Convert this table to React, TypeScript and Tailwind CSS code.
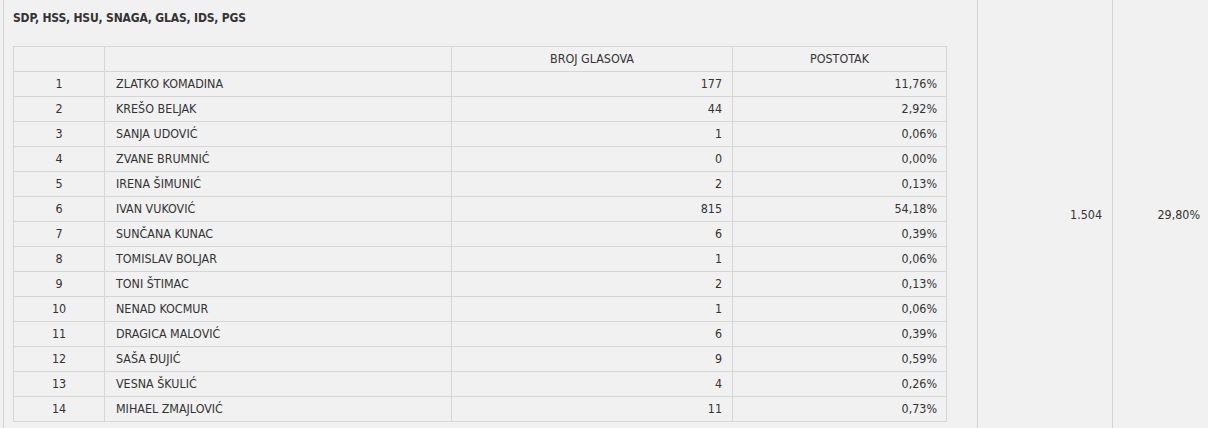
import React from "react";

const rows: [number, string, string, string][] = [
  [1, "ZLATKO KOMADINA", "177", "11,76%"],
  [2, "KREŠO BELJAK", "44", "2,92%"],
  [3, "SANJA UDOVIĆ", "1", "0,06%"],
  [4, "ZVANE BRUMNIĆ", "0", "0,00%"],
  [5, "IRENA ŠIMUNIĆ", "2", "0,13%"],
  [6, "IVAN VUKOVIĆ", "815", "54,18%"],
  [7, "SUNČANA KUNAC", "6", "0,39%"],
  [8, "TOMISLAV BOLJAR", "1", "0,06%"],
  [9, "TONI ŠTIMAC", "2", "0,13%"],
  [10, "NENAD KOCMUR", "1", "0,06%"],
  [11, "DRAGICA MALOVIĆ", "6", "0,39%"],
  [12, "SAŠA ĐUJIĆ", "9", "0,59%"],
  [13, "VESNA ŠKULIĆ", "4", "0,26%"],
  [14, "MIHAEL ZMAJLOVIĆ", "11", "0,73%"],
];

const cell = "border border-[#d6d6d6] h-[25px] p-0 leading-none";

export default function App() {
  return (
    <div
      className="w-[1208px] h-[428px] overflow-hidden bg-[#f1f1f1] text-[#333] text-[12.4px]"
      style={{ fontFamily: '"DejaVu Sans Condensed", "DejaVu Sans", sans-serif' }}
    >
      <div className="ml-[3px] flex h-[432px] border-b border-[#d2d2d2]">
        {/* party list cell */}
        <div className="w-[975px] shrink-0 border-x border-[#d2d2d2] pl-[9px] pt-[11px]">
          <h2 className="text-[12px] font-bold leading-[15px] text-[#333] tracking-[-0.17px]">
            SDP, HSS, HSU, SNAGA, GLAS, IDS, PGS
          </h2>
          <table className="mt-[20px] w-[933px] table-fixed border-collapse">
            <colgroup>
              <col className="w-[91px]" />
              <col className="w-[347px]" />
              <col className="w-[281px]" />
              <col className="w-[214px]" />
            </colgroup>
            <thead>
              <tr>
                <th className={cell}></th>
                <th className={cell}></th>
                <th className={`${cell} text-center font-normal`}>BROJ GLASOVA</th>
                <th className={`${cell} text-center font-normal`}>POSTOTAK</th>
              </tr>
            </thead>
            <tbody>
              {rows.map(([n, name, votes, pct]) => (
                <tr key={n}>
                  <td className={`${cell} text-center`}>{n}</td>
                  <td className={`${cell} pl-[11px]`}>{name}</td>
                  <td className={`${cell} text-right pr-[10px]`}>{votes}</td>
                  <td className={`${cell} text-right pr-[9px]`}>{pct}</td>
                </tr>
              ))}
            </tbody>
          </table>
        </div>
        {/* total votes */}
        <div className="w-[135px] shrink-0 border-r border-[#d2d2d2] flex items-center justify-end pr-[10px]">
          1.504
        </div>
        {/* share */}
        <div className="flex-1 flex items-center justify-end pr-[8px]">29,80%</div>
      </div>
    </div>
  );
}
